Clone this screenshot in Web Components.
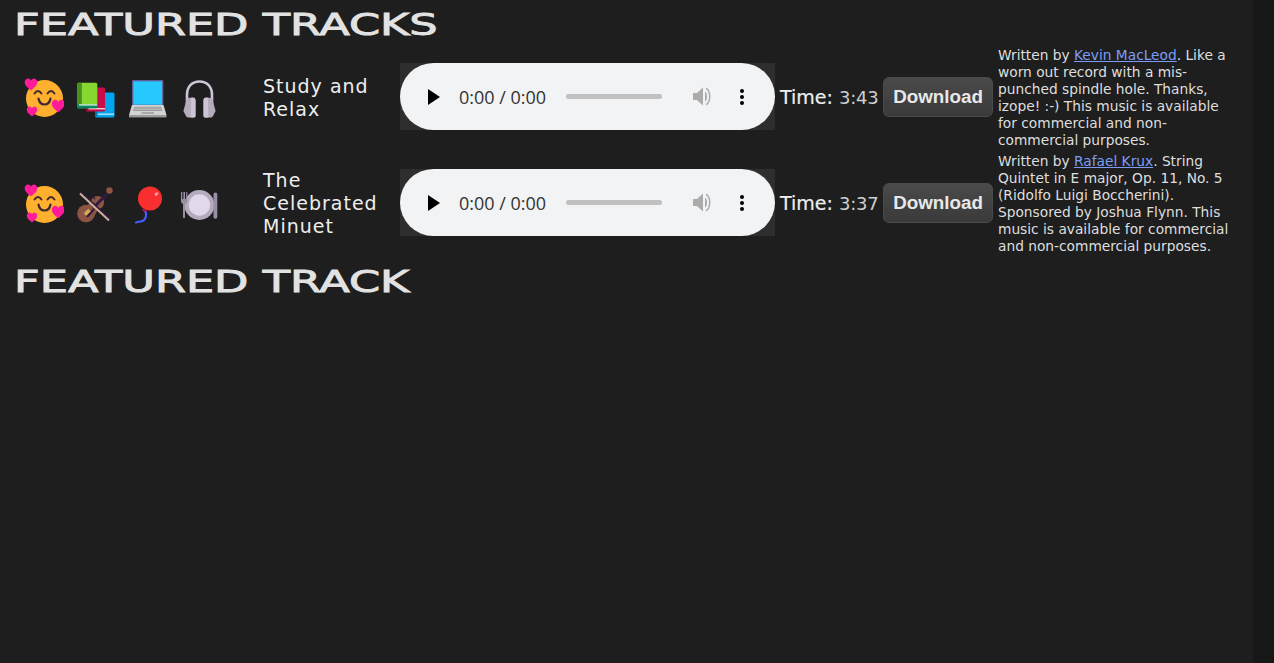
<!DOCTYPE html>
<html><head><meta charset="utf-8">
<style>
html,body{margin:0;height:100%;background:#1e1e1e;overflow:hidden}
body{display:flex;font-family:"DejaVu Sans",sans-serif;color:#e6e6e6}
</style></head><body>
<app-page>
  <section-heading>FEATURED TRACKS</section-heading>
  <track-list>
    <track-row title-text="Study and Relax" time="3:43" icons="face books laptop headphones">
      Written by <credit-link>Kevin MacLeod</credit-link>. Like a worn out record with a mis-punched spindle hole. Thanks, izope! :-) This music is available for commercial and non-commercial purposes.
    </track-row>
    <track-row title-text="The Celebrated Minuet" time="3:37" icons="face violin balloon plate">
      Written by <credit-link>Rafael Krux</credit-link>. String Quintet in E major, Op. 11, No. 5 (Ridolfo Luigi Boccherini). Sponsored by Joshua Flynn. This music is available for commercial and non-commercial purposes.
    </track-row>
  </track-list>
  <section-heading>FEATURED TRACK</section-heading>
</app-page>
<fake-scrollbar></fake-scrollbar>
<script>
const heart=(x,y,s)=>`<path fill="#ff1b9a" transform="translate(${x} ${y}) scale(${s})" d="M0 .95C-.4 .6-1 .2-1-.35-1-.75-.7-.95-.45-.95-.25-.95-.08-.8 0-.6 .08-.8 .25-.95 .45-.95 .7-.95 1-.75 1-.35 1 .2 .4 .6 0 .95Z"/>`;
const ICONS={
face:`<circle cx="20.5" cy="20.5" r="18.5" fill="#ffb02e"/>
<g fill="none" stroke="#402a32" stroke-width="2" stroke-linecap="round"><path d="M10.5 15.5Q14 10.5 17.5 15.5M23.5 15.5Q27 10.5 30.5 15.5"/><path stroke-width="2.2" d="M14.5 20.5Q15.5 26.5 20.5 26.5T26.5 20.5"/></g>
${heart(7,6.5,6.3)}${heart(8,33.5,5.2)}${heart(34.3,28,6.5)}`,
books:`<rect x="19" y="14.5" width="19.5" height="25" rx="1.5" fill="#00a6ed"/><rect x="20" y="35.5" width="18" height="1.4" fill="#b9e6fa"/><rect x="19" y="14.5" width="2.5" height="24" fill="#0074ba"/>
<rect x="10" y="9.5" width="19" height="24" rx="1.5" fill="#ca0b4a"/><rect x="11" y="30" width="18" height="1.4" fill="#f3d0dc"/><rect x="10" y="9.5" width="2.5" height="23" fill="#8e0833"/>
<rect x="1.3" y="4.7" width="20" height="25.6" rx="1.5" fill="#86d72f"/><rect x="1.3" y="4.7" width="4.5" height="25.6" rx="1" fill="#44911b"/><rect x="1.3" y="26.5" width="20" height="3.8" rx="1" fill="#008463"/><rect x="3" y="26.3" width="18" height="1.3" fill="#e1f3dc"/>`,
laptop:`<rect x="4" y="2" width="31.4" height="26" rx="1" fill="#635994"/><rect x="5.3" y="3.3" width="28.8" height="23.4" fill="#26c9fc"/>
<path d="M4 27H35.5L38.5 37H1Z" fill="#d3d3d3"/><rect x="1" y="37" width="37.5" height="2.4" fill="#9b9b9b"/>
<path d="M6.3 28.7H33.2L34.5 33H5Z" fill="#9b9b9b"/><path d="M6.5 30.1H33.2M5.8 31.6H34" stroke="#d3d3d3" stroke-width=".5"/><rect x="13.5" y="34" width="12.5" height="2" fill="#a8a8a8"/>`,
headphones:`<path d="M7 26V17C7 8 12.5 3.5 19.5 3.5S32 8 32 17V26" fill="none" stroke="#cdc4d6" stroke-width="2.6"/>
<path d="M7 20 13 19.5C14.8 19.5 15.5 21 15.5 22.5V38Q15.5 39.4 14 39.4H8Q6.4 39.4 6 38L3.4 33Z" fill="#b4acbc"/><path d="M11.2 19.7H13.4Q15.5 19.7 15.5 22V38Q15.5 39.4 14 39.4H10.6Z" fill="#cdc4d6"/>
<path d="M32 20 26 19.5C24.2 19.5 23.5 21 23.5 22.5V38Q23.5 39.4 25 39.4H31Q32.6 39.4 33 38L35.6 33Z" fill="#b4acbc"/><path d="M27.8 19.7H25.6Q23.5 19.7 23.5 22V38Q23.5 39.4 25 39.4H28.4Z" fill="#cdc4d6"/>`,
violin:`<circle cx="10" cy="29.5" r="8.8" fill="#8c5543"/><circle cx="21.5" cy="18.5" r="6.6" fill="#8c5543"/><path d="M8 24 22 25 18 33 15 18Z" fill="#8c5543"/>
<path d="M11 33 18 25" stroke="#321b41" stroke-width="2.2"/><path d="M18 23 33 8" stroke="#321b41" stroke-width="3"/><path d="M9 30.5 13.5 26" stroke="#d3a95a" stroke-width="3.6"/>
<circle cx="33.5" cy="6.5" r="3.2" fill="#8c5543"/><path d="M25.5 11.5 29 15" stroke="#321b41" stroke-width="1.4"/><path d="M16 12 19 15" stroke="#321b41" stroke-width="1.4"/>
<path d="M4 7.5 34.5 35.5" stroke="#321b41" stroke-width="1.8"/><path d="M4 9.5 33 36.5" stroke="#d3b4a0" stroke-width="1.8"/>`,
balloon:`<circle cx="22" cy="14.5" r="12" fill="#f92f2f"/><ellipse cx="28.5" cy="10" rx="2" ry="1.4" fill="#f4a6b4" transform="rotate(-35 28.5 10)"/><path d="M14.5 24.5 19 27 18.7 28.5 14.5 27Z" fill="#ca0b4a"/>
<path d="M17.5 28C19 31 17.5 35 15.5 36.5 13 38 11 37.5 8 38.5" fill="none" stroke="#3f5fff" stroke-width="2.2" stroke-linecap="round"/>`,
plate:`<circle cx="19.4" cy="21" r="15" fill="#b4acbc"/><circle cx="19.4" cy="21" r="10.7" fill="#e1d8ec"/>
<path d="M1 8V17Q1 19.5 3 20L3 33.5Q4 35 5 33.5L5 20Q7.3 19.5 7.3 17V8H6.2V15H5V8H3.4V15H2.2V8Z" fill="#998ea4"/>
<path d="M33.5 10Q33.5 8.4 35.4 8.4T37.3 10V33.5Q35.4 36 33.5 33.5Z" fill="#998ea4"/>`
};
function el(name,css,html){
  customElements.define(name,class extends HTMLElement{
    constructor(){super();this.attachShadow({mode:"open"}).innerHTML=`<style>${css}</style>${typeof html==="function"?"":html}`;}
    connectedCallback(){ if(typeof html==="function"){this.shadowRoot.innerHTML=`<style>${css}</style>${html(this)}`;} }
  });
}
el("app-page",":host{display:block;flex:1;min-width:0}","<slot></slot>");
el("fake-scrollbar",":host{display:block;width:21px;flex:none;background:#171717}","");
el("section-heading",`:host{display:block;height:47px;overflow:hidden;box-sizing:border-box;padding:5px 0 0 14px}
span{display:inline-block;font:400 31px/38px "DejaVu Sans",sans-serif;color:#e2e2e2;-webkit-text-stroke:.9px #e2e2e2;transform:scaleX(1.44);transform-origin:0 50%;white-space:nowrap}`,"<span><slot></slot></span>");
el("track-list",":host{display:grid;gap:4px;padding-bottom:2px}","<slot></slot>");
el("credit-link",":host{display:inline;color:#7c9cf5;text-decoration:underline;cursor:pointer}","<slot></slot>");
el("track-icon",":host{display:block;width:40px;height:40px}svg{display:block}",h=>`<svg width="40" height="40" viewBox="0 0 40 40">${ICONS[h.getAttribute("name")]}</svg>`);
el("audio-player",`:host{display:block;width:375px;height:67px;background:#2e2e2e;margin-bottom:3px}
.p{height:100%;background:#f1f3f4;border-radius:34px;display:flex;align-items:center;color:#333;font:18px/1 "Open Sans",sans-serif}
.play{margin-left:27px;width:14px;height:16px;flex:none}
.t{margin-left:18px;width:87px;white-space:nowrap;flex:none;letter-spacing:-.02px}
.b{margin-left:20px;width:96px;height:5px;border-radius:3px;background:#c0c0c0;flex:none}
.v{margin-left:30px;flex:none}.m{margin-left:27px;flex:none}`,
`<div class="p"><svg class="play" viewBox="0 0 14 16"><path d="M1 0 13 8 1 16Z" fill="#000"/></svg><span class="t">0:00 / 0:00</span><div class="b"></div>
<svg class="v" width="21" height="21" viewBox="0 0 21 21"><path d="M1 7H5L11 1.5V19.5L5 14H1Z" fill="#ababab"/><path d="M13 5.5C15.8 7 15.8 14 13 15.5ZM14 1.5C20 3.5 20 17.5 14 19.5V17.8C18 16 18 5 14 3.2Z" fill="#ababab"/></svg>
<svg class="m" width="4" height="16" viewBox="0 0 4 16"><circle cx="2" cy="2" r="2"/><circle cx="2" cy="8" r="2"/><circle cx="2" cy="14" r="2"/></svg></div>`);
el("download-button",`:host{display:block;width:110px;height:40px;margin-bottom:2px}
button{all:unset;box-sizing:border-box;display:flex;align-items:center;justify-content:center;width:100%;height:100%;border-radius:6px;border:1px solid #4a4a4a;background:linear-gradient(#4a4a4a,#3a3a3a);color:#e8e8e8;font:700 18.8px "Liberation Sans",sans-serif}`,
"<button>Download</button>");
el("track-row",`:host{display:grid;grid-template-columns:239px 137px 375px 108px 115px 1fr;align-items:center;padding-left:24px;height:102px}
.icons{display:flex;gap:12px}
.title{font:400 19px/23px "DejaVu Sans",sans-serif;letter-spacing:1px;color:#eee;width:125px;margin-bottom:1px}
.time{margin-left:5px;margin-bottom:2px;font:400 19px/1 "DejaVu Sans",sans-serif;white-space:nowrap;color:#eee;-webkit-text-stroke:.2px #eee}
.time b{font-weight:400;color:#cfcfcf;font-size:18px;-webkit-text-stroke:0;letter-spacing:-.2px}
.desc{font:400 13.75px/17px "DejaVu Sans",sans-serif;color:#dedede;width:240px}`,
h=>`<div class="icons">${h.getAttribute("icons").split(" ").map(n=>`<track-icon name="${n}"></track-icon>`).join("")}</div>
<div class="title">${h.getAttribute("title-text")}</div><audio-player></audio-player>
<div class="time">Time: <b>${h.getAttribute("time")}</b></div><download-button></download-button><div class="desc"><slot></slot></div>`);
</script>
</body></html>
